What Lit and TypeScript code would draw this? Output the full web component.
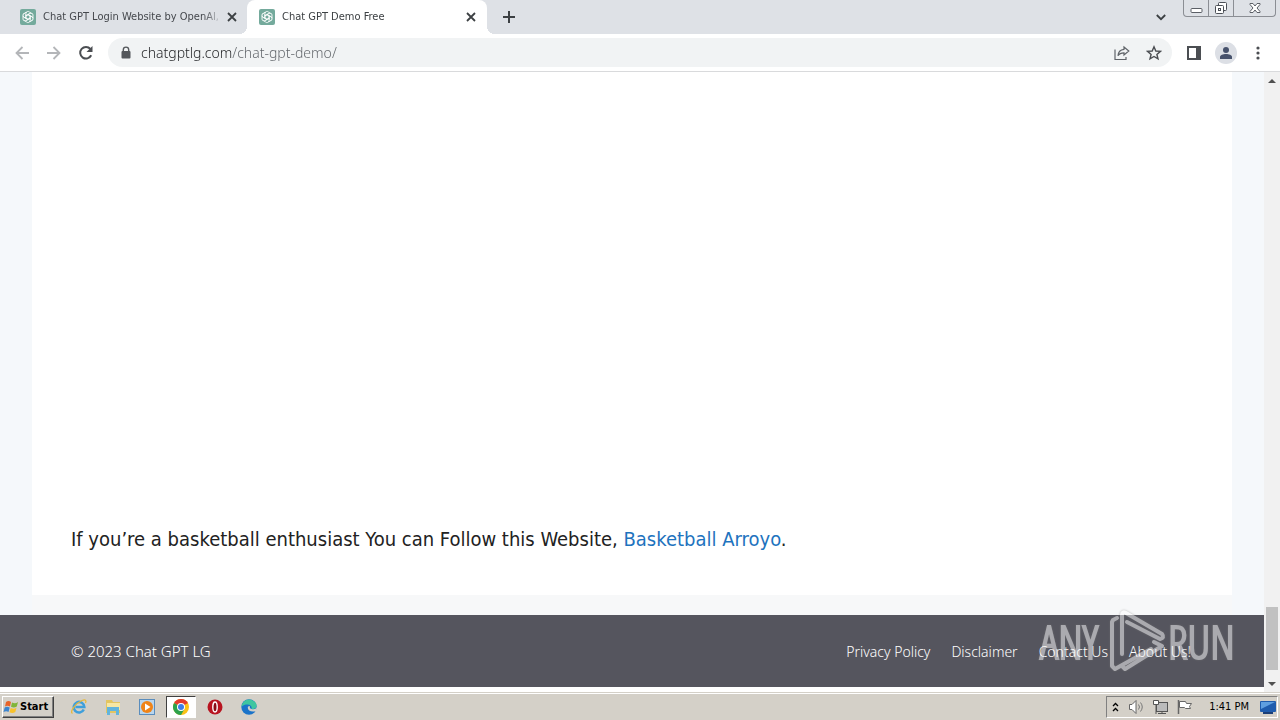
import { LitElement, html, css, svg } from "lit";
import { customElement, property } from "lit/decorators.js";

const knot = svg`
  <rect width="16" height="16" rx="2" fill="#74aa9c"/>
  <g fill="none" stroke="#fff" stroke-width=".9" stroke-linejoin="round">
    ${[0, 60, 120, 180, 240, 300].map(
      (a) => svg`<path transform="rotate(${a} 8 8)" d="M8 5.6 10.1 6.8V10.6M5.9 6.8V4.4A2.1 2.1 0 0 1 9.6 3.2L11.5 4.3"/>`
    )}
  </g>`;

@customElement("browser-tab")
export class BrowserTab extends LitElement {
  @property() label = "";
  @property({ type: Boolean, reflect: true }) active = false;

  static styles = css`
    :host { display: flex; align-items: center; width: 240px; height: 34px; box-sizing: border-box; padding: 0 10px 0 12px; position: relative; color: #45484d; }
    :host([active]) { background: #fff; border-radius: 8px 8px 0 0; color: #3c4043; }
    :host([active])::before, :host([active])::after { content: ""; position: absolute; bottom: 0; width: 8px; height: 8px; }
    :host([active])::before { left: -8px; background: radial-gradient(circle at 0 0, transparent 8px, #fff 8px); }
    :host([active])::after { right: -8px; background: radial-gradient(circle at 100% 0, transparent 8px, #fff 8px); }
    .icon { flex: none; width: 16px; height: 16px; }
    .label { flex: 1; margin: 0 4px 0 7px; font-size: 11px; line-height: 16px; white-space: nowrap; overflow: hidden; -webkit-mask-image: linear-gradient(90deg, #000 90%, transparent); }
    .close { flex: none; border: 0; background: none; padding: 0; width: 12px; height: 16px; display: grid; place-items: center; }
  `;

  render() {
    return html`
      <svg class="icon" viewBox="0 0 16 16">${knot}</svg>
      <span class="label">${this.label}</span>
      <button class="close" aria-label="Close tab">
        <svg width="10" height="10" viewBox="0 0 10 10"><path d="m1 1 8 8M9 1 1 9" stroke="#3c4043" stroke-width="1.8"/></svg>
      </button>`;
  }
}

@customElement("app-root")
export class AppRoot extends LitElement {
  static styles = css`
    :host { display: flex; flex-direction: column; height: 100vh; overflow: hidden; position: relative; background: #fff; font-family: "DejaVu Sans Condensed", "Noto Sans", sans-serif; }
    button { font: inherit; border: 0; background: none; padding: 0; display: grid; place-items: center; }
    a { text-decoration: none; color: inherit; }
    svg { display: block; }

    .tabs { flex: none; display: flex; height: 34px; background: #dee1e6; padding-left: 8px; }
    .tabs browser-tab + browser-tab { margin-left: -1px; }
    .new { width: 28px; margin-left: 8px; }
    .search { width: 24px; margin-left: auto; }
    .window { display: flex; width: 93px; height: 17px; margin: 0 4px 0 10px; box-sizing: border-box; border: 1px solid #8b8e94; border-top: 0; border-radius: 0 0 4px 4px; }
    .window button { flex: 1; }
    .window button + button { border-left: 1px solid #8b8e94; }
    .window .wide { flex: 0 0 42px; }

    .toolbar { flex: none; display: flex; align-items: center; height: 37px; padding: 0 10px; border-bottom: 1px solid #d9dadc; }
    .nav { width: 24px; height: 28px; margin-right: 8px; }
    .address { flex: 1; display: flex; align-items: center; height: 29px; margin-left: 2px; padding: 0 10px 0 12px; border-radius: 15px; background: #f1f3f4; }
    .url { flex: 1; min-width: 0; margin-left: 9px; border: 0; padding: 0; outline: 0; font-family: "Noto Sans", sans-serif; font-weight: 300; font-size: 14px; line-height: 20px; color: transparent; background: linear-gradient(90deg, #202124 91px, #5f6368 91px); -webkit-background-clip: text; background-clip: text; }
    .act { width: 16px; height: 24px; margin-left: 16px; }
    .side { width: 16px; margin-left: 14px; }
    .me { width: 22px; height: 22px; border-radius: 50%; background: #dcdfe5; margin: 0 9px 0 13px; }
    .dots { width: 16px; margin: 0 4px; }

    .view { flex: 1; min-height: 0; display: flex; }
    .page { flex: 1; display: flex; flex-direction: column; background: #f5f8fb; }
    main { flex: 1; margin: 0 32px; padding: 0 39px 40px; background: #fff; display: flex; align-items: flex-end; }
    main p { margin: 0; font-size: 20px; line-height: 32px; color: #222; }
    main a { color: #1e73be; }
    .gap { height: 20px; margin: 0 32px; background: #f7f8f9; }
    footer { display: flex; justify-content: space-between; align-items: center; height: 72px; padding: 0 73px 0 71px; border-bottom: 5px solid #fff; background: #55555e; color: #fff; font-size: 15px; font-weight: 300; font-family: "Noto Sans", sans-serif; }
    footer nav { display: flex; gap: 21px; font-size: 14px; }

    .scroll { width: 16px; display: flex; flex-direction: column; align-items: center; background: #f1f1f1; }
    .scroll button { width: 16px; height: 17px; }
    .track { flex: 1; display: flex; align-items: flex-end; }
    .thumb { width: 12px; height: 63px; margin-bottom: 5px; background: #c1c1c1; }

    .taskbar { flex: none; height: 27px; border-top: 1px solid #d4d0c8; background: #d4d0c8; box-shadow: inset 0 1px #fff; display: flex; align-items: center; padding: 0 2px; font-size: 11px; color: #000; }
    .start { width: 52px; height: 22px; box-sizing: border-box; display: flex; align-items: center; gap: 1px; font-weight: 700; border: 1px solid; border-color: #fff #404040 #404040 #fff; box-shadow: inset -1px -1px #808080; }
    .apps { display: flex; margin-left: 10px; gap: 4px; }
    .app { width: 30px; height: 22px; box-sizing: border-box; }
    .app.on { background: #fff; border: 1px solid; border-color: #404040 #fff #fff #404040; }
    .tray { margin-left: auto; height: 22px; box-sizing: border-box; display: flex; align-items: center; gap: 7px; padding: 0 1px 0 5px; border: 1px solid; border-color: #808080 #fff #fff #808080; }
    .more { margin-right: 2px; }
    .clock { margin: 0 4px 0 9px; }

    .mark { position: absolute; right: 44px; bottom: 44px; pointer-events: none; opacity: .5; filter: drop-shadow(0 0 1px #777); }
  `;

  render() {
    return html`
      <div class="tabs">
        <browser-tab label="Chat GPT Login Website by OpenAI,"></browser-tab>
        <browser-tab label="Chat GPT Demo Free" active></browser-tab>
        <button class="new" aria-label="New tab"><svg width="12" height="12"><path d="M6 0v12M0 6h12" stroke="#3c4043" stroke-width="2"/></svg></button>
        <button class="search" aria-label="Search tabs"><svg width="10" height="7"><path d="m.8 1 4.2 4.2L9.200 1" fill="none" stroke="#3c4043" stroke-width="1.800"/></svg></button>
        <div class="window">
          <button aria-label="Minimize"><svg width="13" height="16"><rect x="1" y="8.500" width="11" height="4" rx="1" fill="#fff" stroke="#5b5f66"/></svg></button>
          <button aria-label="Restore"><svg width="14" height="16"><g fill="#fff" stroke="#4b4f56"><rect x="4.500" y="2.500" width="8" height="8" rx="1"/><rect x="1.500" y="5.500" width="8" height="8" rx="1"/><rect x="4.500" y="8.500" width="2" height="2"/></g></svg></button>
          <button class="wide" aria-label="Close"><svg width="12" height="16"><path d="M1 3.500h3l2 2.500 2-2.500h3v1L8 8l3 3.500v1H8L6 10l-2 2.500H1v-1L4 8 1 4.500z" fill="#fff" stroke="#5b5f66"/></svg></button>
        </div>
      </div>

      <div class="toolbar">
        <button class="nav" aria-label="Back"><svg width="14" height="14"><path d="M14 7H1.500M7.500 1l-6 6 6 6" fill="none" stroke="#b4b6b9" stroke-width="1.800"/></svg></button>
        <button class="nav" aria-label="Forward"><svg width="14" height="14"><path d="M0 7h12.500M6.500 1l6 6-6 6" fill="none" stroke="#b4b6b9" stroke-width="1.800"/></svg></button>
        <button class="nav" aria-label="Reload"><svg width="16" height="16"><path d="M13.200 10.300A5.800 5.800 0 1 1 12.400 4" fill="none" stroke="#4b4e52" stroke-width="2"/><path d="M14.500 1v6h-6z" fill="#4b4e52"/></svg></button>
        <div class="address">
          <svg width="12" height="14"><path d="M3.300 6V3.800a2.700 2.700 0 0 1 5.400 0V6" fill="none" stroke="#54575b" stroke-width="1.400"/><rect x="1.500" y="5" width="9" height="7.500" rx="1" fill="#54575b"/></svg>
          <input class="url" aria-label="Address" value="chatgptlg.com/chat-gpt-demo/">
          <button class="act" aria-label="Share"><svg width="16" height="16"><path d="M1 4.500v10h11V12M10 2l4.800 4-4.800 4V7.800c-3 0-4.800.8-6 3C4.200 7 6.500 4.700 10 4.300z" fill="none" stroke="#5f6368" stroke-width="1.200"/></svg></button>
          <button class="act" aria-label="Bookmark"><svg width="16" height="16"><path d="m8 1.800 1.800 4.200 4.600.4-3.500 3 1.100 4.500L8 11.500l-4 2.400 1.100-4.500-3.500-3L6.200 6z" fill="none" stroke="#4b4e52" stroke-width="1.400"/></svg></button>
        </div>
        <button class="side" aria-label="Side panel"><svg width="14" height="14"><path d="M1 1h12v12H1z" fill="none" stroke="#4b4e52" stroke-width="2"/><path d="M9 1h4v12H9z" fill="#4b4e52"/></svg></button>
        <button class="me" aria-label="Profile"><svg width="12" height="14"><circle cx="6" cy="4" r="3" fill="#47526c"/><path d="M0 13v-2c0-2 3-3 6-3s6 1 6 3v2z" fill="#47526c"/></svg></button>
        <button class="dots" aria-label="Menu"><svg width="4" height="14"><g fill="#4b4e52"><circle cx="2" cy="2" r="1.600"/><circle cx="2" cy="7" r="1.600"/><circle cx="2" cy="12" r="1.600"/></g></svg></button>
      </div>

      <div class="view">
        <div class="page">
          <main><p>If you’re a basketball enthusiast You can Follow this Website, <a href="#">Basketball Arroyo</a>.</p></main>
          <div class="gap"></div>
          <footer>
            <span>© 2023 Chat GPT LG</span>
            <nav><a href="#">Privacy Policy</a><a href="#">Disclaimer</a><a href="#">Contact Us</a><a href="#">About Us!</a></nav>
          </footer>
        </div>
        <div class="scroll">
          <button aria-label="Scroll up"><svg width="8" height="4"><path d="M0 4 4 0l4 4z" fill="#505050"/></svg></button>
          <div class="track"><div class="thumb"></div></div>
          <button aria-label="Scroll down"><svg width="8" height="4"><path d="m0 0 4 4 4-4z" fill="#505050"/></svg></button>
        </div>
      </div>

      <div class="taskbar">
        <button class="start"><svg width="16" height="16" viewBox="0 0 16 16"><path d="M3 3c2-1.500 3.500-1 5 0L7 7.500c-2-1-3.500-1-5 0z" fill="#e8642a"/><path d="M9 3.500c2 1 4 1 6-.5l-1.200 4.500c-2 1.300-3.800 1.300-5.800.3z" fill="#80b53a"/><path d="M1.700 8.500c1.500-1 3-1 5 0L5.500 13c-1.500-1-3-1-5 0z" fill="#3c85cf"/><path d="M7.700 9c2 1 4 1 5.800-.3L12.300 13c-1.800 1.300-3.800 1.300-5.800.3z" fill="#f8c22c"/></svg>Start</button>
        <div class="apps">
          <button class="app" aria-label="Internet Explorer"><svg width="18" height="18"><path d="M13.800 11.500A5.300 5.300 0 1 1 14.300 9H5.500" fill="none" stroke="#3e9fdb" stroke-width="2.600"/><path d="M2.500 15.500C-1 14 6 5 12 2.500c4-1.500 4.500.5 3.500 2.500" fill="none" stroke="#e7b83a" stroke-width="1.300"/></svg></button>
          <button class="app" aria-label="Explorer"><svg width="18" height="18"><path d="M2 2h6l1 2h7v11H2z" fill="#e3c561"/><path d="M3 5h13v7H3z" fill="#f7e7a3"/><path d="M3 17V9h12v8h-3v-4H6v4z" fill="#62b4dc"/></svg></button>
          <button class="app" aria-label="Media Player"><svg width="18" height="18"><rect x="1.500" y="1.500" width="15" height="15" fill="#b9d6ee" stroke="#5a8dbd"/><circle cx="9" cy="9" r="6" fill="#f08418"/><path d="M7 5.500v7L12.500 9z" fill="#fff"/></svg></button>
          <button class="app on" aria-label="Chrome"><svg width="16" height="16"><circle cx="8" cy="8" r="8" fill="#fbc116"/><path d="M8 8 1.070 4A8 8 0 0 1 14.930 4z" fill="#e33b2e"/><path d="M8 8 1.070 4A8 8 0 0 0 8 16l3.500-6z" fill="#2da24c"/><circle cx="8" cy="8" r="4" fill="#fff"/><circle cx="8" cy="8" r="3" fill="#3d7de8"/></svg></button>
          <button class="app" aria-label="Opera"><svg width="16" height="16"><circle cx="8" cy="8" r="7.500" fill="#b81420"/><ellipse cx="8" cy="8" rx="2.200" ry="5" fill="#8a0d16" stroke="#fff" stroke-width="1.400"/></svg></button>
          <button class="app" aria-label="Edge"><svg width="16" height="16"><circle cx="8" cy="8" r="7.700" fill="#1a73c9"/><path d="M.5 8C1 3.500 4 .4 8 .4s7.600 3 7.600 6.300c0 2.500-2.500 3.800-5 3.300.5-3-1.500-4.500-4-4.500S2 6 .5 8z" fill="#3fc6a0"/><path d="M7 7.500c-1 3 1.500 5.500 6.500 5 1-.2 2-.8 2-.8L16 8c-1 2-3 2.500-5.500 2-1.500-.3-2-1.500-1.500-3z" fill="#d4d0c8"/></svg></button>
        </div>
        <div class="tray">
          <svg class="more" width="7" height="12"><path d="m1 5 2.500-2.500L6 5M1 10l2.500-2.500L6 10" fill="none" stroke="#000" stroke-width="1.300"/></svg>
          <svg width="17" height="16"><path d="M1.500 5.500H4l4-4v13l-4-4H1.500z" fill="#fff" stroke="#666"/><path d="M10.500 5.500q2 2.500 0 5M12.500 3.500q3.500 4.500 0 9" fill="none" stroke="#777"/></svg>
          <svg width="17" height="16"><rect x="4.500" y="3.500" width="11" height="9" fill="#bbb" stroke="#555"/><path d="M6 14.500h8M10 13v2" stroke="#555"/><path d="M1.500 1.500h5v4h-5zM4 6v9" fill="#fff" stroke="#555"/></svg>
          <svg width="17" height="16"><path d="M2.500 1v14" stroke="#666" stroke-width="1.500"/><path d="M3.500 2.500h6l1 2h5l-2 3 1 2h-5l-1-1h-5z" fill="#fff" stroke="#666"/></svg>
          <span class="clock">1:41 PM</span>
          <svg width="16" height="16"><rect x="0" y="2" width="16" height="11" rx="1" fill="#1f5cad"/><path d="M1 3h14L1 10z" fill="#5f9fe0"/><path d="M3 13h10v2H3z" fill="#1b3f78"/></svg>
        </div>
      </div>

      <svg class="mark" width="200" height="70" viewBox="0 0 200 70" aria-hidden="true">
        <g fill="#fff" stroke="#fff" stroke-width="2" font-family="Open Sans Condensed Light, Liberation Sans Narrow" font-weight="300" font-size="46">
          <text x="4" y="53">ANY</text><text x="132" y="53">RUN</text>
        </g>
        <path fill="none" stroke="#fff" stroke-width="4" stroke-linejoin="round" stroke-linecap="round"
          d="M81 12l-4 2-1 2v44l3 3 36-20M86 48V9q0-4 4-2l36 21q3 4-2 5L91 16M118 36l8 4-37 23-3-3"/>
      </svg>`;
  }
}
